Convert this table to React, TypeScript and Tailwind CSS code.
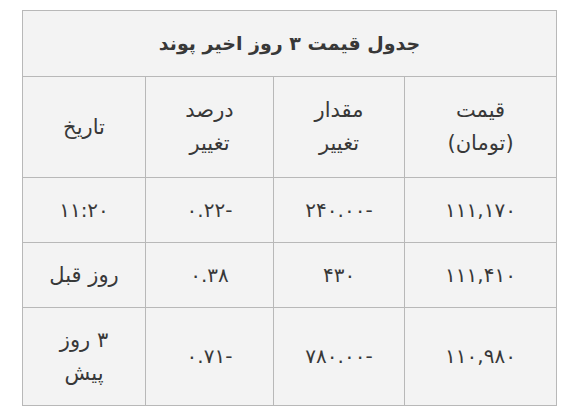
const rows = [
  { price: "۱۱۱,۱۷۰", change: "۲۴۰.۰۰-", percent: "۰.۲۲-", date: ["۱۱:۲۰"], num: true, h: "h-[65px]" },
  { price: "۱۱۱,۴۱۰", change: "۴۳۰", percent: "۰.۳۸", date: ["روز قبل"], num: false, h: "h-[65px]" },
  { price: "۱۱۰,۹۸۰", change: "۷۸۰.۰۰-", percent: "۰.۷۱-", date: ["۳ روز", "پیش"], num: false, h: "h-[98px]" },
];

const cell = "border border-[#b8b8b8] bg-[#f3f3f3] text-center align-middle px-2";

export default function App() {
  return (
    <div className="min-h-[418px] bg-white pt-[10px] pl-[22px]" style={{ fontFamily: '"DejaVu Sans", sans-serif' }}>
      <table dir="rtl" className="border-collapse table-fixed w-[534px] text-[#383838] text-[21px] leading-[33px]">
        <colgroup>
          <col className="w-[152px]" />
          <col className="w-[131px]" />
          <col className="w-[128px]" />
          <col className="w-[123px]" />
        </colgroup>
        <thead>
          <tr className="h-[66px]">
            <th colSpan={4} className={`${cell} font-bold text-[19px]`}>
              جدول قیمت ۳ روز اخیر پوند
            </th>
          </tr>
          <tr className="h-[101px]">
            <th className={`${cell} font-normal`}>قیمت<br />(تومان)</th>
            <th className={`${cell} font-normal`}>مقدار<br />تغییر</th>
            <th className={`${cell} font-normal`}>درصد<br />تغییر</th>
            <th className={`${cell} font-normal`}>تاریخ</th>
          </tr>
        </thead>
        <tbody>
          {rows.map((r, i) => (
            <tr key={i} className={r.h}>
              <td className={`${cell} text-[20px]`}><span dir="ltr">{r.price}</span></td>
              <td className={`${cell} text-[20px]`}><span dir="ltr">{r.change}</span></td>
              <td className={`${cell} text-[20px]`}><span dir="ltr">{r.percent}</span></td>
              <td className={`${cell} whitespace-nowrap ${r.num ? "text-[20px]" : ""}`}>
                {r.date.map((line, j) => (
                  <div key={j}>{line}</div>
                ))}
              </td>
            </tr>
          ))}
        </tbody>
      </table>
    </div>
  );
}
